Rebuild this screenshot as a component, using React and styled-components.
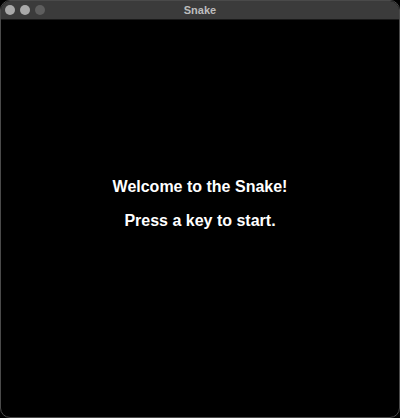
import React from 'react'
import styled, { createGlobalStyle } from 'styled-components'

const Global = createGlobalStyle`
  html, body {
    margin: 0;
    padding: 0;
    background: #000;
  }
  body {
    font-family: "Liberation Sans", Arial, sans-serif;
  }
`;

const Window = styled.div`
  width: 400px;
  height: 418px;
  box-sizing: border-box;
  border: 1px solid #4a4a4a;
  border-radius: 10px;
  overflow: hidden;
  background: #000;
  display: flex;
  flex-direction: column;
`;

const TitleBar = styled.div`
  height: 18px;
  background: #3b3b3b;
  border-bottom: 1px solid #1a1a1a;
  position: relative;
  display: flex;
  align-items: center;
  justify-content: center;
`;

const Lights = styled.div`
  position: absolute;
  left: 4px;
  top: 4px;
  display: flex;
  gap: 5px;
`;

const Light = styled.span`
  width: 10px;
  height: 10px;
  border-radius: 50%;
  background: ${p => p.dim ? '#5e5e5e' : '#a9a9a9'};
`;

const Title = styled.span`
  color: #bdbdbd;
  font-size: 11px;
  font-weight: bold;
`;

const Screen = styled.div`
  flex: 1;
  display: flex;
  flex-direction: column;
  align-items: center;
  padding-top: 157px;
  gap: 15px;
`;

const Line = styled.div`
  color: #fff;
  font-size: 16px;
  font-weight: bold;
  line-height: 19px;
`;

export default function App() {
  return (
    <>
      <Global />
      <Window>
        <TitleBar>
          <Lights>
            <Light />
            <Light />
            <Light dim />
          </Lights>
          <Title>Snake</Title>
        </TitleBar>
        <Screen>
          <Line>Welcome to the Snake!</Line>
          <Line>Press a key to start.</Line>
        </Screen>
      </Window>
    </>
  )
}
